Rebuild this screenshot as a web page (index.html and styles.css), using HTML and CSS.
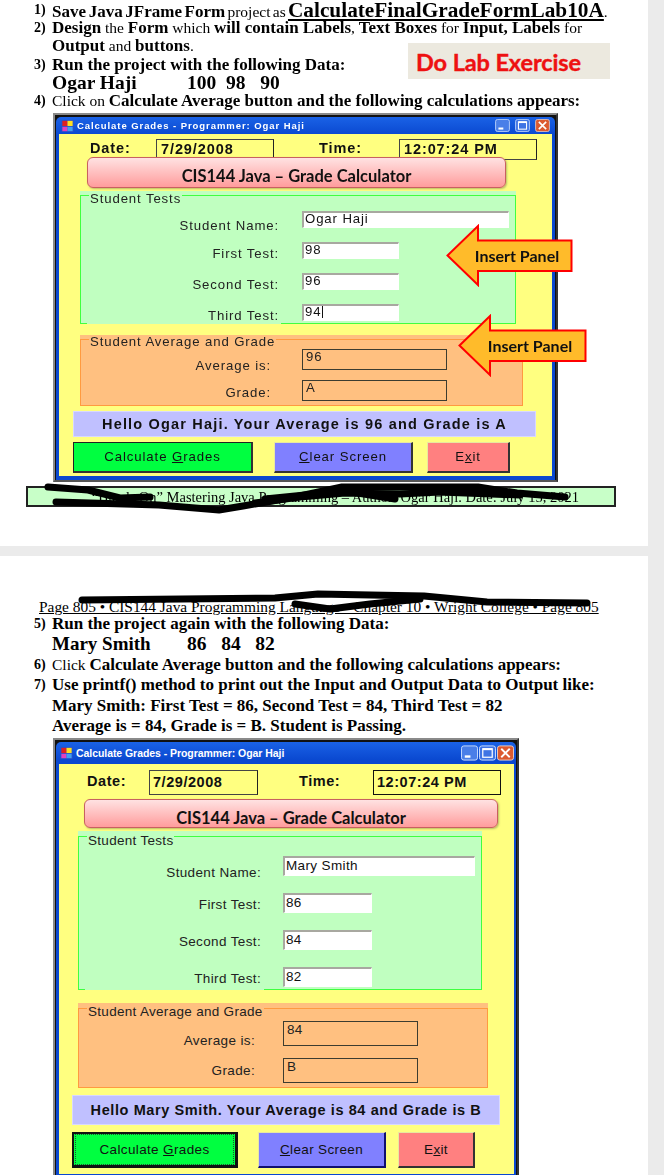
FILE: index.html
```html
<!DOCTYPE html>
<html lang="en">
<head>
<meta charset="utf-8">
<title>Lab 10A</title>
<link rel="stylesheet" href="styles.css">
</head>
<body>
<main class="sheet">
  <section class="page page-one">
    <div class="doc doc-one">
      <p class="line"><b class="num">1)</b><span class="tight"><b>Save Java JFrame Form</b> project as <b class="huge">CalculateFinalGradeFormLab10A</b>.</span></p>
      <p class="line"><b class="num">2)</b><span><b>Design</b> the <b>Form</b> which <b>will contain Labels</b>, <b>Text Boxes</b> for <b>Input, Labels</b> for</span></p>
      <p class="line"><b class="num"></b><span><b>Output</b> and <b>buttons</b>.</span></p>
      <p class="line"><b class="num">3)</b><span><b>Run the project with the following Data:</b></span></p>
      <p class="line data"><b class="num"></b><b class="data-name name-a">Ogar Haji</b><b>100&nbsp; 98&nbsp;&nbsp; 90</b></p>
      <p class="line"><b class="num">4)</b><span>Click on <b>Calculate Average button and the following calculations appears:</b></span></p>
    </div>

    <div class="win win-a">
      <div class="win-blue">
        <div class="titlebar">
          <svg class="app-icon" viewBox="0 0 14 14"><rect width="14" height="14" fill="#2a50c8"/><rect x="1" y="1" width="6" height="6" fill="#e02020"/><rect x="7" y="1" width="6" height="6" fill="#ffe020"/><rect x="1" y="8" width="6" height="5" fill="#e040c0"/><rect x="7" y="8" width="6" height="5" fill="#40a0f0"/></svg>
          <span class="title-text">Calculate Grades - Programmer: Ogar Haji</span>
          <span class="controls">
            <svg class="ctl" viewBox="0 0 18 16"><rect x=".5" y=".5" width="17" height="15" rx="2.5" fill="#4a7fe8" stroke="#cfe0ff"/><rect x="4" y="10.5" width="6" height="2.5" fill="#fff"/></svg>
            <svg class="ctl" viewBox="0 0 18 16"><rect x=".5" y=".5" width="17" height="15" rx="2.5" fill="#3f74e4" stroke="#cfe0ff"/><rect x="4" y="3.5" width="10" height="9" fill="none" stroke="#fff" stroke-width="1.3"/><rect x="4" y="3" width="10" height="2" fill="#fff"/></svg>
            <svg class="ctl" viewBox="0 0 18 16"><rect x=".5" y=".5" width="17" height="15" rx="2.5" fill="#dc5a30" stroke="#f0d0c0"/><path d="M4.5 3.5l9 9M13.5 3.5l-9 9" stroke="#fff" stroke-width="2"/></svg>
          </span>
        </div>
        <div class="client">
          <div class="date-row">
            <span class="dt-label date-label">Date:</span><span class="dt-box date-box">7/29/2008</span>
            <span class="dt-label time-label">Time:</span><span class="dt-box time-box">12:07:24 PM</span>
          </div>
          <div class="banner">CIS144 Java – Grade Calculator</div>
          <div class="panel green">
            <fieldset>
              <legend>Student Tests</legend>
              <div class="row first-row"><span class="lbl">Student Name:</span><span class="inp wide">Ogar Haji</span></div>
              <div class="row"><span class="lbl">First Test:</span><span class="inp">98</span></div>
              <div class="row"><span class="lbl">Second Test:</span><span class="inp">96</span></div>
              <div class="row"><span class="lbl">Third Test:</span><span class="inp"><span class="caret">94</span></span></div>
            </fieldset>
          </div>
          <div class="panel orange">
            <fieldset>
              <legend>Student Average and Grade</legend>
              <div class="row first-row"><span class="lbl">Average is:</span><span class="out">96</span></div>
              <div class="row"><span class="lbl">Grade:</span><span class="out">A</span></div>
            </fieldset>
          </div>
          <div class="message">Hello Ogar Haji. Your Average is 96 and Grade is A</div>
          <div class="buttons">
            <span class="btn calc"><span>Calculate <u>G</u>rades</span></span>
            <span class="btn clear"><span><u>C</u>lear Screen</span></span>
            <span class="btn exit"><span>E<u>x</u>it</span></span>
          </div>
        </div>
      </div>
    </div>

    <div class="footer-box">“Hands On” Mastering Java Programming – Author: Ogar Haji. Date: July 15, 2021</div>

    <div class="lab-note">Do Lab Exercise</div>

    <div class="arrow arrow-one">
      <svg class="arrow-shape" viewBox="0 0 127 63"><polygon points="1.5,31.5 32,2 32,16.5 125.5,16.5 125.5,47 32,47 32,61" fill="#ffbb2a" stroke="#ff0000" stroke-width="2"/></svg>
      <span class="arrow-text">Insert Panel</span>
    </div>
    <div class="arrow arrow-two">
      <svg class="arrow-shape" viewBox="0 0 129 63"><polygon points="1.5,31.5 32,2 32,16.5 127.5,16.5 127.5,47 32,47 32,61" fill="#ffbb2a" stroke="#ff0000" stroke-width="2"/></svg>
      <span class="arrow-text">Insert Panel</span>
    </div>

    <svg class="scribble scribble-one" viewBox="0 0 648 546">
      <path d="M48 487L88 490L120 498L150 497" />
      <path d="M56 502L159 505L219 510L243 506L295 497L342 487L438 487L478 487L517 493L565 497" />
      <path d="M255 503L300 497L345 493L400 494L440 492L520 495" />
      <path d="M265 499L345 491L395 499" />
    </svg>
  </section>

  <section class="page page-two">
    <div class="page-head">Page 805 • CIS144 Java Programming Language • Chapter 10 • Wright College • Page 805</div>
    <div class="doc doc-two">
      <p class="line"><b class="num">5)</b><span><b>Run the project again with the following Data:</b></span></p>
      <p class="line data"><b class="num"></b><b class="data-name name-b">Mary Smith</b><b>86&nbsp;&nbsp; 84&nbsp;&nbsp; 82</b></p>
      <p class="line"><b class="num">6)</b><span>Click <b>Calculate Average button and the following calculations appears:</b></span></p>
      <p class="line"><b class="num">7)</b><span><b>Use printf() method to print out the Input and Output Data to Output like:</b></span></p>
      <p class="line"><b class="num"></b><span><b>Mary Smith: First Test = 86, Second Test = 84, Third Test = 82</b></span></p>
      <p class="line"><b class="num"></b><span><b>Average is = 84, Grade is = B. Student is Passing.</b></span></p>
    </div>

    <div class="win win-b">
      <div class="win-blue">
        <div class="titlebar">
          <svg class="app-icon" viewBox="0 0 14 14"><rect width="14" height="14" fill="#2a50c8"/><rect x="1" y="1" width="6" height="6" fill="#e02020"/><rect x="7" y="1" width="6" height="6" fill="#ffe020"/><rect x="1" y="8" width="6" height="5" fill="#e040c0"/><rect x="7" y="8" width="6" height="5" fill="#40a0f0"/></svg>
          <span class="title-text">Calculate Grades - Programmer: Ogar Haji</span>
          <span class="controls">
            <svg class="ctl" viewBox="0 0 18 16"><rect x=".5" y=".5" width="17" height="15" rx="2.5" fill="#4a7fe8" stroke="#cfe0ff"/><rect x="4" y="10.5" width="6" height="2.5" fill="#fff"/></svg>
            <svg class="ctl" viewBox="0 0 18 16"><rect x=".5" y=".5" width="17" height="15" rx="2.5" fill="#3f74e4" stroke="#cfe0ff"/><rect x="4" y="3.5" width="10" height="9" fill="none" stroke="#fff" stroke-width="1.3"/><rect x="4" y="3" width="10" height="2" fill="#fff"/></svg>
            <svg class="ctl" viewBox="0 0 18 16"><rect x=".5" y=".5" width="17" height="15" rx="2.5" fill="#dc5a30" stroke="#f0d0c0"/><path d="M4.5 3.5l9 9M13.5 3.5l-9 9" stroke="#fff" stroke-width="2"/></svg>
          </span>
        </div>
        <div class="client">
          <div class="date-row">
            <span class="dt-label date-label">Date:</span><span class="dt-box date-box">7/29/2008</span>
            <span class="dt-label time-label">Time:</span><span class="dt-box time-box">12:07:24 PM</span>
          </div>
          <div class="banner">CIS144 Java – Grade Calculator</div>
          <div class="panel green">
            <fieldset>
              <legend>Student Tests</legend>
              <div class="row first-row"><span class="lbl">Student Name:</span><span class="inp wide">Mary Smith</span></div>
              <div class="row"><span class="lbl">First Test:</span><span class="inp">86</span></div>
              <div class="row"><span class="lbl">Second Test:</span><span class="inp">84</span></div>
              <div class="row"><span class="lbl">Third Test:</span><span class="inp">82</span></div>
            </fieldset>
          </div>
          <div class="panel orange">
            <fieldset>
              <legend>Student Average and Grade</legend>
              <div class="row first-row"><span class="lbl">Average is:</span><span class="out">84</span></div>
              <div class="row"><span class="lbl">Grade:</span><span class="out">B</span></div>
            </fieldset>
          </div>
          <div class="message">Hello Mary Smith. Your Average is 84 and Grade is B</div>
          <div class="buttons">
            <span class="btn calc focused"><span class="focus-ring"><span>Calculate <u>G</u>rades</span></span></span>
            <span class="btn clear"><span><u>C</u>lear Screen</span></span>
            <span class="btn exit"><span>E<u>x</u>it</span></span>
          </div>
        </div>
      </div>
    </div>

    <svg class="scribble scribble-two" viewBox="0 0 648 619">
      <path d="M82 44L275 42L318 38L424 40L487 46L587 47" />
      <path d="M295 48L330 53L370 48L420 43" />
    </svg>
  </section>
</main>
</body>
</html>
```

FILE: styles.css
```css
* { box-sizing: border-box; }
html, body { margin: 0; padding: 0; }
body { height: 1175px; overflow: hidden; background: #ebebeb; color: #000; }
.sheet { width: 648px; filter: blur(.35px); }
.page { position: relative; background: #fff; }
.page-one { height: 546px; padding-top: 1px; }
.page-two { height: 619px; margin-top: 10px; padding-top: 44px; }

/* document text */
.doc { font-family: "Liberation Serif", "Times New Roman", serif; }
.line { display: flex; margin: 0; padding-left: 34px; font-size: 15.5px; white-space: nowrap; }
.line b { font-size: 17px; }
.doc-one .line { height: 18.2px; line-height: 18.2px; }
.doc-two .line { height: 20.4px; line-height: 20.4px; }
.num { flex: none; width: 18px; font-size: 14px !important; }
.tight { word-spacing: -1.6px; }
.huge { font-size: 21.3px !important; text-decoration: underline; }
.data b { font-size: 19.5px; }
.data .num { font-size: 14px; }
.data-name { display: inline-block; }
.name-a { width: 135px; }
.name-b { width: 135px; font-size: 19px !important; }
.page-head { height: 14px; padding-left: 39px; font: 15.4px/14px "Liberation Serif", serif; text-decoration: underline; white-space: nowrap; }

/* window shell */
.win { background: #111; border: 2px solid #8a8a8a; border-right-color: #333; border-bottom-color: #555; }
.win-a { width: 505px; height: 369px; margin: 2.8px 0 0 53px; padding: 2px 1px 0 1px; }
.win-b { width: 466px; height: 450px; margin: 1.6px 0 0 53px; padding: 2px 1px 0 1px; }
.win-blue { height: 100%; border-radius: 5px 5px 0 0; background: linear-gradient(#1a62e6, #0a48d0 18px); }
.win-a .win-blue { padding: 0 2px 2px 3px; }
.win-b .win-blue { padding: 0 2px 2px 3px; }
.titlebar { display: flex; align-items: center; color: #fff; font-family: "Liberation Sans", Arial, sans-serif; font-weight: bold; white-space: nowrap; }
.win-a .titlebar { height: 17px; padding: 1px 1px 0 2px; font-size: 9.5px; letter-spacing: .93px; }
.win-b .titlebar { height: 22px; padding: 0 0 0 1px; font-size: 10.5px; letter-spacing: -.06px; }
.app-icon { flex: none; }
.win-a .app-icon { width: 13px; height: 12px; margin-right: 3px; }
.win-b .app-icon { width: 13px; height: 12px; margin-right: 3px; }
.controls { display: flex; margin-left: auto; gap: 1px; }
.win-a .ctl { width: 19px; height: 13px; }
.win-b .ctl { width: 17px; height: 16px; }
.client { background: #ffff80; overflow: hidden; font-family: "Liberation Sans", Arial, sans-serif; color: #222; }
.win-a .client { width: 493px; height: 342px; }
.win-b .client { width: 455px; height: 410px; }

/* date row */
.date-row { display: flex; position: relative; font-weight: bold; color: #111; white-space: nowrap; }
.dt-box { border: 1px solid #444; border-right-color: #222; }
.win-a .date-row { margin-top: 5px; padding-left: 31px; font-size: 14.5px; letter-spacing: .9px; }
.win-a .date-label { width: 66px; padding-top: 1px; }
.win-a .date-box { width: 118px; height: 21px; padding: 1px 0 0 4px; }
.win-a .time-label { width: 80px; margin-left: 45px; padding-top: 1px; }
.win-a .time-box { width: 138px; height: 21px; padding: 1px 0 0 4px; }
.win-b .date-row { margin-top: 6px; padding-left: 28px; font-size: 14.5px; letter-spacing: .55px; }
.win-b .date-label { width: 62px; padding-top: 3px; }
.win-b .date-box { width: 109px; height: 25px; padding: 3px 0 0 3px; }
.win-b .time-label { width: 74px; margin-left: 41px; padding-top: 3px; }
.win-b .time-box { width: 128px; height: 25px; padding: 3px 0 0 3px; border-color: #111; }

/* banner */
.banner { position: relative; border: 1px solid #c86060; border-radius: 6px; background: linear-gradient(#ffe2e2, #ff9c9c); box-shadow: 1px 1px 2px rgba(120, 120, 80, .5); text-align: center; color: #111; font-family: Lato, "Open Sans", sans-serif; font-weight: bold; font-size: 16.5px; white-space: nowrap; }
.win-a .banner { width: 419px; height: 31px; margin: -3px 0 0 28px; line-height: 36px; }
.win-b .banner { width: 414px; height: 29px; margin: 4px 0 0 25px; line-height: 36px; overflow: hidden; }

/* group panels */
.panel fieldset { position: relative; height: 100%; min-width: 0; margin: 0; padding: 0; color: #222; }
.panel legend { margin-left: 8px; padding: 0 1px; white-space: nowrap; }
.green { background: #c0ffc0; }
.green fieldset { border: 1px solid #40ff40; }
.orange { background: #ffc080; }
.orange fieldset { border: 1px solid #ff9a40; }
.green fieldset::after { content: ""; position: absolute; bottom: -1px; height: 1px; background: #c0ffc0; }
.win-a .panel legend { height: 10px; padding-top: 3px; font-size: 13.2px; line-height: 10px; letter-spacing: .88px; }
.win-b .panel legend { height: 12px; padding-top: 4px; font-size: 13.5px; line-height: 12px; letter-spacing: .3px; }
.win-a .orange legend { padding-top: 2px; }
.win-b .orange legend { padding-top: 3px; }
.win-a .green { width: 436px; height: 133px; margin: 3px 0 0 21px; }
.win-b .green { width: 404px; height: 159px; margin: 3px 0 0 19px; }
.win-a .green fieldset::after { left: 6px; width: 194px; }
.win-b .green fieldset::after { left: 6px; width: 179px; }
.win-a .orange { width: 443px; height: 71px; margin: 11px 0 0 21px; }
.win-b .orange { width: 410px; height: 85px; margin: 13px 0 0 19px; }

/* rows */
.row { display: flex; white-space: nowrap; }
.lbl { flex: none; text-align: right; }
.inp { flex: none; background: #fff; border: 1px solid #fff; border-top: 2px solid #a8a8a0; border-left: 2px solid #a8a8a0; color: #111; }
.out { flex: none; border: 1px solid #3c3c30; color: #222; }
.caret { display: inline-block; padding-right: 1px; border-right: 1px solid #111; }

.win-a .row { font-size: 13.2px; letter-spacing: .88px; }
.win-a .green .row { height: 17px; margin-bottom: 14px; }
.win-a .green .first-row { margin-top: 10px; }
.win-a .green .lbl { width: 198px; margin: 3px 23px 0 0; line-height: 17px; }
.win-a .green .first-row .lbl { margin-top: 6px; }
.win-a .inp { width: 97px; height: 17px; padding-left: 1px; line-height: 12px; }
.win-a .inp.wide { width: 207px; }
.win-a .orange .row { height: 21px; margin-bottom: 10px; }
.win-a .orange .first-row { margin-top: 4px; }
.win-a .orange .lbl { width: 190px; margin: 2px 31px 0 0; line-height: 21px; }
.win-a .orange .first-row .lbl { margin-top: 6px; }
.win-a .out { width: 145px; height: 21px; padding-left: 3px; line-height: 13px; }

.win-b .row { font-size: 13.5px; letter-spacing: .36px; }
.win-b .green .row { height: 20px; margin-bottom: 17px; }
.win-b .green .first-row { margin-top: 13px; }
.win-b .green .lbl { width: 182px; margin: 2px 22px 0 0; line-height: 20px; }
.win-b .green .first-row .lbl { margin-top: 7px; }
.win-b .inp { width: 89px; height: 20px; padding-left: 1px; line-height: 15px; }
.win-b .inp.wide { width: 192px; }
.win-b .orange .row { height: 25px; margin-bottom: 12px; }
.win-b .orange .first-row { margin-top: 6px; }
.win-b .orange .lbl { width: 176px; margin: 0 28px 0 0; line-height: 25px; }
.win-b .orange .first-row .lbl { margin-top: 7px; }
.win-b .out { width: 135px; height: 25px; padding-left: 3px; line-height: 16px; }

/* message */
.message { background: #c0c0ff; border: 1px solid #d8d8ff; text-align: center; color: #111; font-weight: bold; white-space: nowrap; }
.win-a .message { width: 463px; height: 26px; margin: 5px 0 0 14px; font-size: 14.5px; line-height: 25px; letter-spacing: 1.18px; }
.win-b .message { width: 428px; height: 30px; margin: 7px 0 0 13px; font-size: 14.5px; line-height: 29px; letter-spacing: .6px; }

/* buttons */
.buttons { display: flex; }
.btn { display: flex; align-items: center; justify-content: center; flex: none; border: 1px solid #e8e8a0; border-right: 2px solid #333; border-bottom: 2px solid #333; color: #111; white-space: nowrap; }
.calc { background: #00ff40; }
.clear { background: #8080ff; }
.exit { background: #ff8080; }
.win-a .buttons { margin: 5px 0 0 14px; font-size: 13.2px; letter-spacing: .9px; }
.win-a .btn { height: 31px; }
.win-a .calc { width: 180px; border-left-color: #222; border-top-color: #222; }
.win-a .clear { width: 139px; margin-left: 21px; }
.win-a .exit { width: 83px; margin-left: 14px; }
.win-b .buttons { margin: 7px 0 0 13px; font-size: 13.5px; letter-spacing: .36px; }
.win-b .btn { height: 36px; }
.win-b .calc { width: 166px; }
.win-b .clear { width: 128px; margin-left: 20px; border-right-color: #101070; border-bottom-color: #101070; }
.win-b .exit { width: 77px; margin-left: 12px; }
.focused { border: 2px solid #111; border-right-width: 3px; border-bottom-width: 3px; }
.focus-ring { display: flex; align-items: center; justify-content: center; width: 100%; height: 100%; margin: 1px; border: 1px dotted #205030; }

/* footer */
.footer-box { width: 590px; height: 21px; margin: 4px 0 0 26px; padding: 1px 35px 0 0; border: 2px solid #222; background: #c8ffc8; text-align: right; font: 14.5px/17px "Liberation Serif", serif; white-space: nowrap; }

/* overlays */
.lab-note { position: absolute; left: 408px; top: 43px; width: 202px; height: 36px; padding-left: 8px; background: #ece9df; color: #ee1111; font: bold 23.5px/39px Lato, "Open Sans", sans-serif; letter-spacing: -.1px; -webkit-text-stroke: .4px #ee1111; white-space: nowrap; }
.arrow { position: absolute; }
.arrow-shape { display: block; width: 100%; height: 100%; }
.arrow-text { position: absolute; top: 0; bottom: 0; left: 15px; right: 0; display: flex; align-items: center; justify-content: center; color: #111; font: bold 16px Lato, "Open Sans", sans-serif; white-space: nowrap; }
.arrow-one { left: 446px; top: 224px; width: 127px; height: 63px; }
.arrow-two { left: 458px; top: 314px; width: 129px; height: 63px; }
.scribble { position: absolute; left: 0; top: 0; width: 648px; pointer-events: none; }
.scribble-one { height: 546px; }
.scribble-two { height: 619px; }
.scribble path { fill: none; stroke: #000; stroke-width: 7px; stroke-linecap: round; stroke-linejoin: round; }
```
